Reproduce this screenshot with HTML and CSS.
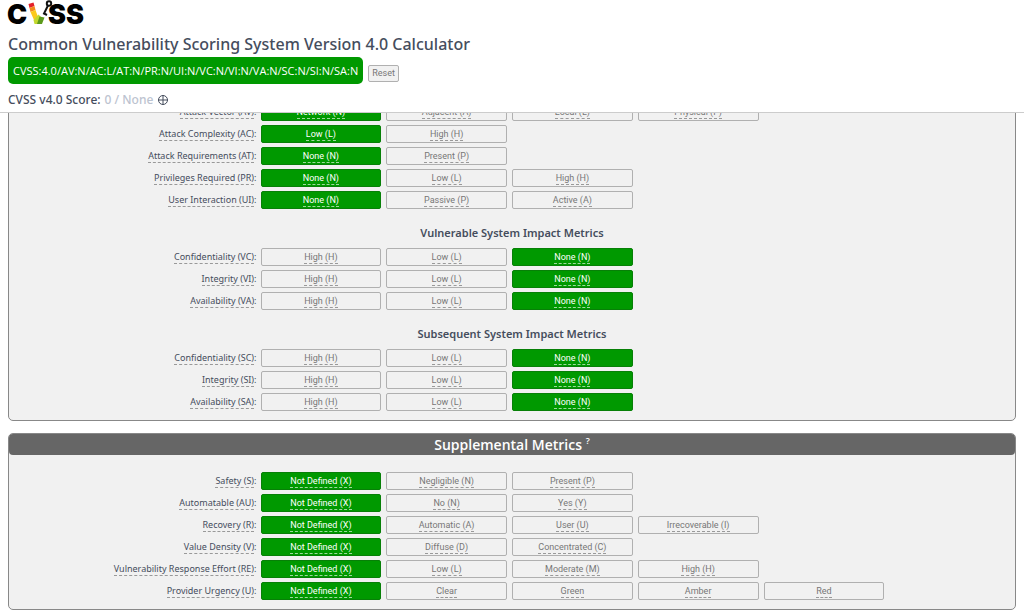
FILE: index.html
```
<!DOCTYPE html>
<html lang="en">
<head>
<meta charset="utf-8">
<title>Common Vulnerability Scoring System Version 4.0 Calculator</title>
<link rel="stylesheet" href="styles.css">
</head>
<body>
<header class="top">
  <svg class="logo" viewBox="0 0 80 28" role="img" aria-label="CVSS">
    <text class="logo-text" x="-1" y="24">C</text>
    <path fill="#e3202b" d="M20.500 4l5-1.500 1 3.500-5 2z"/>
    <path fill="#f08a1d" d="M21.500 8l5-2 1 4-5 2z"/>
    <path fill="#fbc91b" d="M22.500 12l5-2 2.500 7-4 3z"/>
    <path fill="#c3d82e" d="M25.500 20l5-5.500 3 3-3 6.500h-4z"/>
    <path fill="#5c9a1c" d="M31.500 16.500l5 1-2.500 6.500h-5z"/>
    <circle class="pick" cx="41" cy="3.500" r="2.200"/>
    <path class="pick" d="M40 5.500l-4 8 3 1.500"/>
    <text class="logo-text" x="40" y="24">SS</text>
  </svg>
  <h1 class="title">Common Vulnerability Scoring System Version 4.0 Calculator</h1>
  <div class="vector-row">
    <button class="vector" type="button">CVSS:4.0/AV:N/AC:L/AT:N/PR:N/UI:N/VC:N/VI:N/VA:N/SC:N/SI:N/SA:N</button>
    <button class="reset" type="button">Reset</button>
  </div>
  <div class="score">CVSS v4.0 Score: <span class="score-value">0 / None</span>
    <svg class="plus" viewBox="0 0 12 12" role="img" aria-label="Show details"><circle cx="6" cy="6" r="4.500"/><path d="M6 1v10M1 6h10"/></svg>
  </div>
</header>
<main class="panels">
  <section class="panel base">
    <div class="row"><span class="label"><abbr>Attack Vector (AV)</abbr>:</span><button class="opt on"><abbr>Network (N)</abbr></button><button class="opt"><abbr>Adjacent (A)</abbr></button><button class="opt"><abbr>Local (L)</abbr></button><button class="opt"><abbr>Physical (P)</abbr></button></div>
    <div class="row"><span class="label"><abbr>Attack Complexity (AC)</abbr>:</span><button class="opt on"><abbr>Low (L)</abbr></button><button class="opt"><abbr>High (H)</abbr></button></div>
    <div class="row"><span class="label"><abbr>Attack Requirements (AT)</abbr>:</span><button class="opt on"><abbr>None (N)</abbr></button><button class="opt"><abbr>Present (P)</abbr></button></div>
    <div class="row"><span class="label"><abbr>Privileges Required (PR)</abbr>:</span><button class="opt on"><abbr>None (N)</abbr></button><button class="opt"><abbr>Low (L)</abbr></button><button class="opt"><abbr>High (H)</abbr></button></div>
    <div class="row"><span class="label"><abbr>User Interaction (UI)</abbr>:</span><button class="opt on"><abbr>None (N)</abbr></button><button class="opt"><abbr>Passive (P)</abbr></button><button class="opt"><abbr>Active (A)</abbr></button></div>
    <h2 class="group">Vulnerable System Impact Metrics</h2>
    <div class="row"><span class="label"><abbr>Confidentiality (VC)</abbr>:</span><button class="opt"><abbr>High (H)</abbr></button><button class="opt"><abbr>Low (L)</abbr></button><button class="opt on"><abbr>None (N)</abbr></button></div>
    <div class="row"><span class="label"><abbr>Integrity (VI)</abbr>:</span><button class="opt"><abbr>High (H)</abbr></button><button class="opt"><abbr>Low (L)</abbr></button><button class="opt on"><abbr>None (N)</abbr></button></div>
    <div class="row"><span class="label"><abbr>Availability (VA)</abbr>:</span><button class="opt"><abbr>High (H)</abbr></button><button class="opt"><abbr>Low (L)</abbr></button><button class="opt on"><abbr>None (N)</abbr></button></div>
    <h2 class="group">Subsequent System Impact Metrics</h2>
    <div class="row"><span class="label"><abbr>Confidentiality (SC)</abbr>:</span><button class="opt"><abbr>High (H)</abbr></button><button class="opt"><abbr>Low (L)</abbr></button><button class="opt on"><abbr>None (N)</abbr></button></div>
    <div class="row"><span class="label"><abbr>Integrity (SI)</abbr>:</span><button class="opt"><abbr>High (H)</abbr></button><button class="opt"><abbr>Low (L)</abbr></button><button class="opt on"><abbr>None (N)</abbr></button></div>
    <div class="row"><span class="label"><abbr>Availability (SA)</abbr>:</span><button class="opt"><abbr>High (H)</abbr></button><button class="opt"><abbr>Low (L)</abbr></button><button class="opt on"><abbr>None (N)</abbr></button></div>
  </section>
  <section class="panel supplemental">
    <h2 class="panel-title">Supplemental Metrics <sup>?</sup></h2>
    <div class="row"><span class="label"><abbr>Safety (S)</abbr>:</span><button class="opt on"><abbr>Not Defined (X)</abbr></button><button class="opt"><abbr>Negligible (N)</abbr></button><button class="opt"><abbr>Present (P)</abbr></button></div>
    <div class="row"><span class="label"><abbr>Automatable (AU)</abbr>:</span><button class="opt on"><abbr>Not Defined (X)</abbr></button><button class="opt"><abbr>No (N)</abbr></button><button class="opt"><abbr>Yes (Y)</abbr></button></div>
    <div class="row"><span class="label"><abbr>Recovery (R)</abbr>:</span><button class="opt on"><abbr>Not Defined (X)</abbr></button><button class="opt"><abbr>Automatic (A)</abbr></button><button class="opt"><abbr>User (U)</abbr></button><button class="opt"><abbr>Irrecoverable (I)</abbr></button></div>
    <div class="row"><span class="label"><abbr>Value Density (V)</abbr>:</span><button class="opt on"><abbr>Not Defined (X)</abbr></button><button class="opt"><abbr>Diffuse (D)</abbr></button><button class="opt"><abbr>Concentrated (C)</abbr></button></div>
    <div class="row"><span class="label"><abbr>Vulnerability Response Effort (RE)</abbr>:</span><button class="opt on"><abbr>Not Defined (X)</abbr></button><button class="opt"><abbr>Low (L)</abbr></button><button class="opt"><abbr>Moderate (M)</abbr></button><button class="opt"><abbr>High (H)</abbr></button></div>
    <div class="row"><span class="label"><abbr>Provider Urgency (U)</abbr>:</span><button class="opt on"><abbr>Not Defined (X)</abbr></button><button class="opt"><abbr>Clear</abbr></button><button class="opt"><abbr>Green</abbr></button><button class="opt"><abbr>Amber</abbr></button><button class="opt"><abbr>Red</abbr></button></div>
  </section>
</main>
</body>
</html>
```
FILE: styles.css
```
* { box-sizing: border-box; }
body {
  margin: 0;
  background: #fff;
  color: #454d5d;
  font-family: "Noto Sans", "Open Sans", sans-serif;
}
button { font-family: inherit; margin: 0; cursor: pointer; }
.top {
  position: sticky;
  top: 0;
  z-index: 2;
  padding: 0 8px 4px;
  background: #fff;
  border-bottom: 1px solid #ccc;
}
.logo { display: block; width: 80px; height: 28px; overflow: visible; }
.logo-text { font: 900 27px Inter, sans-serif; fill: #000; }
.pick { fill: none; stroke: #111; stroke-width: 2; }
.title { margin: 4px 0 0; font-size: 16px; line-height: 25px; font-weight: 500; }
.vector-row { display: flex; align-items: center; gap: 5px; }
.vector {
  height: 27px;
  padding: 0 5px;
  border: 0;
  border-radius: 5px;
  background: #090;
  color: #fff;
  font-family: "Open Sans", sans-serif;
  font-size: 11px;
  white-space: nowrap;
}
.reset {
  height: 17px;
  margin-top: 5px;
  padding: 0 3px;
  border: 1px solid #b0b0b0;
  border-radius: 2px;
  background: #f1f1f1;
  color: #777;
  font-family: Roboto, sans-serif;
  font-size: 9px;
}
.score {
  display: flex;
  align-items: center;
  gap: 4px;
  margin-top: 8px;
  font-size: 12px;
  line-height: 16px;
  font-weight: 500;
}
.score-value { color: #bcc3d0; }
.plus { width: 12px; height: 12px; fill: none; stroke: #454d5d; }
.panels { padding: 0 8px; }
.panel {
  margin-bottom: 12px;
  background: #f1f1f1;
  border: 1px solid #888;
  border-radius: 5px;
}
.base { margin-top: -14px; padding: 1px 0 7px; }
.supplemental { margin-bottom: 0; padding-bottom: 7px; }
.row {
  display: grid;
  grid-template-columns: 25% repeat(6, 12.5%);
  align-items: center;
  height: 22px;
}
.label {
  padding-right: 4px;
  text-align: right;
  font-size: 9px;
  line-height: 12px;
}
abbr { border-bottom: 1px dashed #999; }
.label abbr { display: inline-block; }
.opt {
  height: 18px;
  margin: 0 5px 0 0;
  padding: 1px 0 0;
  border: 1px solid #b0b0b0;
  border-radius: 2px;
  background: #f1f1f1;
  color: #777;
  font-family: Roboto, sans-serif;
  font-size: 9px;
  line-height: 12px;
}
.opt abbr { display: inline-block; line-height: 12px; }
.on { background: #090; border-color: #078007; color: #fff; }
.on abbr { border-color: #9fd89f; }
.group {
  margin: 13px 0 4px;
  text-align: center;
  font-size: 11px;
  line-height: 18px;
  font-weight: 600;
}
.panel-title {
  margin: 0 0 15px;
  border-radius: 4px;
  background: #666;
  color: #fff;
  text-align: center;
  font-family: "Open Sans", sans-serif;
  font-size: 14px;
  line-height: 21px;
  font-weight: 600;
}
.panel-title sup { font-size: 9px; line-height: 0; }
```
